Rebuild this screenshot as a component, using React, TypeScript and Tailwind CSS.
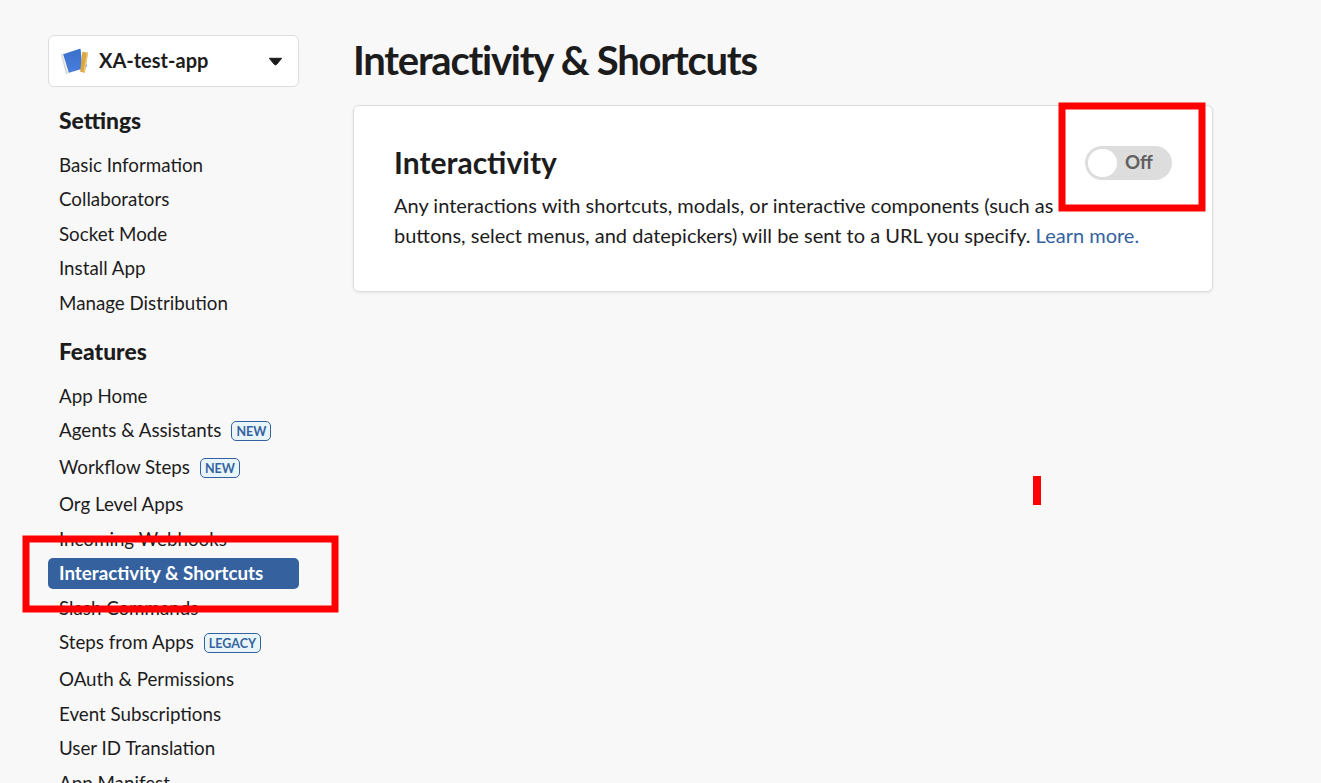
type Item = { label: string; badge?: string; active?: boolean };

const settings: Item[] = [
  { label: "Basic Information" },
  { label: "Collaborators" },
  { label: "Socket Mode" },
  { label: "Install App" },
  { label: "Manage Distribution" },
];

const features: Item[] = [
  { label: "App Home" },
  { label: "Agents & Assistants", badge: "NEW" },
  { label: "Workflow Steps", badge: "NEW" },
  { label: "Org Level Apps" },
  { label: "Incoming Webhooks" },
  { label: "Interactivity & Shortcuts", active: true },
  { label: "Slash Commands" },
  { label: "Steps from Apps", badge: "LEGACY" },
  { label: "OAuth & Permissions" },
  { label: "Event Subscriptions" },
  { label: "User ID Translation" },
  { label: "App Manifest" },
];

function AppIcon() {
  return (
    <svg width="28" height="28" viewBox="0.3 0.3 27.4 27.4" className="shrink-0">
      <defs>
        <linearGradient id="cover" x1="0" y1="0" x2="0" y2="1">
          <stop offset="0" stopColor="#3a70cc" />
          <stop offset="1" stopColor="#4a7ddc" />
        </linearGradient>
      </defs>
      <path d="M.3 8 3 7l5.6 18.8-3.4.9z" fill="#cfd2d3" />
      <path d="m1.3 8.2 1.6-.7 5.2 18-1.6.4z" fill="#f2f2f0" />
      <path d="m23.8 17 1.8.6-.5 2.4-1.7-.2z" fill="#4778d4" />
      <path d="M2.4 7.4 18.6 2q.8-.2.9.7l1.9 19L8 25.6z" fill="url(#cover)" />
      <path d="m21.2 5 5.6 1-3.3 19.5-4.4-.9z" fill="#d9a743" />
      <path d="m25.4 5.8 1.4.2-3.3 19.5-1.3-.3z" fill="#ebc678" />
    </svg>
  );
}

function Nav({ items }: { items: Item[] }) {
  return (
    <ul className="flex flex-col">
      {items.map((item) => (
        <li key={item.label} className={item.badge ? "h-[36.9px]" : "h-[34.5px]"}>
          <a
            className={
              item.active
                ? "flex h-[31px] items-center rounded-[5px] bg-[#35629f] px-[11px] font-bold text-white"
                : "flex h-[31px] items-center px-[11px]"
            }
          >
            <span className="whitespace-nowrap">{item.label}</span>
            {item.badge && (
              <span className="mt-px ml-[10px] flex h-5 items-center rounded-[5px] border border-[#35629f] bg-[#e8f5fa] px-1 pt-[3px] text-[12.5px] leading-none font-bold text-[#35629f]">
                {item.badge}
              </span>
            )}
          </a>
        </li>
      ))}
    </ul>
  );
}

export default function App() {
  return (
    <div className="relative flex h-[783px] w-[1321px] overflow-hidden bg-[#f8f8f8] pl-12 font-['Lato',sans-serif] text-[18.75px] text-[#1d1c1d]">
      <aside className="w-[251px] shrink-0 pt-[35px]">
        <button className="flex h-[52px] w-full items-center rounded-[6px] border border-[#dddddd] bg-white pr-[15px] pl-3 text-left">
          <AppIcon />
          <span className="ml-[10px] flex-1 pb-0.5 text-[20px] font-bold">XA-test-app</span>
          <svg width="15" height="9" viewBox="0 0 15 9">
            <path d="M1.3 1.3h12.4L8.7 7.3q-1.2 1.2-2.4 0z" fill="#1d1c1d" stroke="#1d1c1d" strokeLinejoin="round" />
          </svg>
        </button>
        <h2 className="mt-[18px] mb-[14.1px] pl-[11px] text-[22.8px] leading-[30px] font-black">Settings</h2>
        <Nav items={settings} />
        <h2 className="mt-[14.4px] mb-[14.5px] pl-[11px] text-[22.8px] leading-[30px] font-black">Features</h2>
        <Nav items={features} />
      </aside>

      <main className="ml-[54px] w-[860px] pt-[34px]">
        <h1 className="text-[40px] leading-[52px] font-bold tracking-[-1.25px]">Interactivity &amp; Shortcuts</h1>
        <section className="mt-[19px] h-[187px] rounded-[6px] border border-[#dddddd] bg-white px-10 pt-10 shadow-[0_1px_3px_rgba(0,0,0,0.08)]">
          <div className="flex items-start justify-between">
            <h2 className="text-[30px] leading-[33px] font-bold">Interactivity</h2>
            <div className="flex h-[34px] w-[87px] items-center rounded-full bg-[#dddddd] pl-[3px]">
              <span className="h-7 w-[29px] rounded-full bg-white" />
              <span className="ml-[8px] pb-px text-[18.75px] font-bold text-[#616061]">Off</span>
            </div>
          </div>
          <p className="mt-[10px] text-[20px] leading-[30px] whitespace-nowrap">
            Any interactions with shortcuts, modals, or interactive components (such as
            <br />
            buttons, select menus, and datepickers) will be sent to a URL you specify.{" "}
            <a className="text-[#35629f]">Learn more.</a>
          </p>
        </section>
      </main>

      <div className="absolute top-[103px] left-[1059px] h-[109px] w-[147px] [transform:translate(-0.5px,-0.5px)] border-[7px] border-[#ff0000]" />
      <div className="absolute top-[536px] left-[23px] h-[77px] w-[316px] [transform:translate(-0.5px,-0.5px)] border-[7px] border-[#ff0000]" />
      <div className="absolute top-[476px] left-[1033px] h-[29px] w-2 bg-[#ff0000]" />
    </div>
  );
}
